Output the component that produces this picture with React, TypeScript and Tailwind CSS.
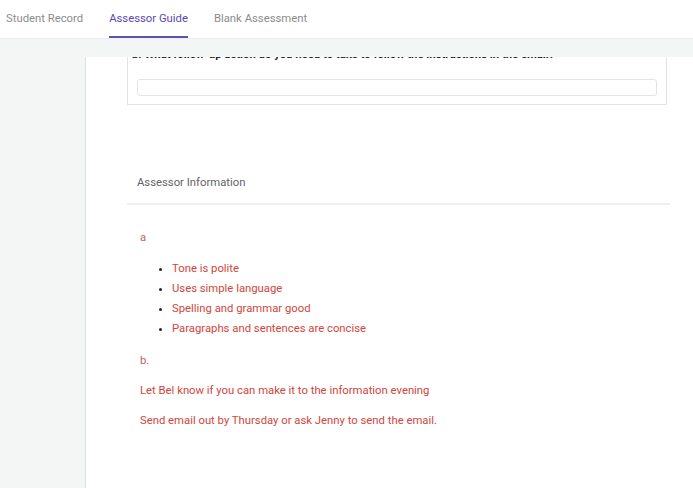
import React from "react"

const tabs = [
  { label: "Student Record", active: false },
  { label: "Assessor Guide", active: true },
  { label: "Blank Assessment", active: false },
]

const checks = [
  "Tone is polite",
  "Uses simple language",
  "Spelling and grammar good",
  "Paragraphs and sentences are concise",
]

export default function App() {
  return (
    <div className="w-[693px] h-[488px] overflow-hidden bg-[#f4f6f6] font-['Roboto',sans-serif] text-[11.3px]">
      {/* tab bar */}
      <header className="h-[39px] bg-white border-b border-[#eceeee] flex items-stretch pl-[6px] gap-[26px]">
        {tabs.map((tab) => (
          <div
            key={tab.label}
            className={
              tab.active
                ? "flex items-center pt-[3px] border-b-2 border-[#5f4fb8] text-[#5a48b0]"
                : "flex items-center pt-[3px] border-b-2 border-transparent text-[#8c8c8c]"
            }
          >
            {tab.label}
          </div>
        ))}
      </header>

      <div className="h-[18px]" />

      <div className="flex h-[431px]">
        <aside className="w-[86px] shrink-0 border-r border-[#dcdfdf]" />

        <main className="flex-1 bg-white pl-[41px] pr-[23px]">
          {/* previous question card, scrolled under the header */}
          <div className="mr-[3px] border-x border-b border-[#e3e3e3] overflow-hidden px-[9px] pb-[8px]">
            <p className="-mt-[10px] -ml-[5px] leading-[16px] font-bold text-[#222] whitespace-nowrap">
              b. What follow-up action do you need to take to follow the instructions in the email?
            </p>
            <div className="mt-[16px] h-[17px] border border-[#e4e4e4] rounded-[3px]" />
          </div>

          {/* assessor info */}
          <div className="mt-[70px] pl-[10px] pb-[12px] border-b-2 border-[#eef0f0]">
            <h2 className="leading-[16px] text-[#5f6368]">Assessor Information</h2>
          </div>

          <div className="pl-[13px] text-[#d0463c]">
            <p className="mt-[25px] leading-[16px] text-[#c4625c]">a</p>
            <ul className="mt-[13px] pl-[32px] list-disc marker:text-[#222]">
              {checks.map((c) => (
                <li key={c} className="leading-[20px]">
                  {c}
                </li>
              ))}
            </ul>
            <p className="mt-[14px] leading-[16px] text-[#c4625c]">b.</p>
            <p className="mt-[14px] leading-[16px]">Let Bel know if you can make it to the information evening</p>
            <p className="mt-[14px] leading-[16px]">Send email out by Thursday or ask Jenny to send the email.</p>
          </div>
        </main>
      </div>
    </div>
  )
}
